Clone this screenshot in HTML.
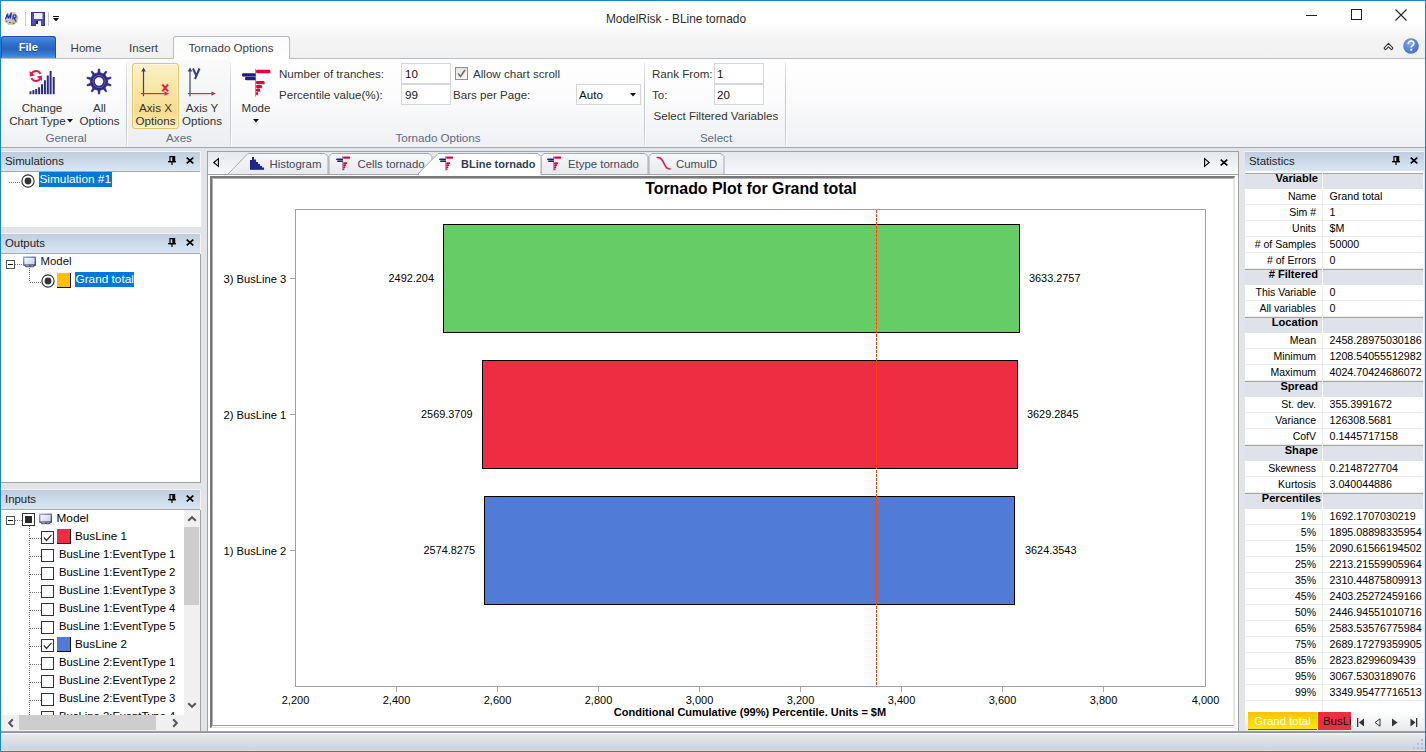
<!DOCTYPE html><html><head><meta charset="utf-8"><style>
html,body{margin:0;padding:0;}
body{width:1426px;height:752px;position:relative;overflow:hidden;background:#e1e5ea;font-family:"Liberation Sans",sans-serif;}
.r{position:absolute;box-sizing:border-box;}
.t{position:absolute;white-space:pre;line-height:20px;height:20px;}
svg{overflow:visible}
</style></head><body>
<div class="r" style="left:0px;top:0px;width:1426px;height:59px;background:linear-gradient(#ffffff 0px,#ffffff 22px,#f3f3f3 40px,#f1f1f1 58px)"></div>
<svg class="r" style="left:2px;top:9px;" width="20" height="20" viewBox="0 0 20 20"><defs><linearGradient id="dg" x1="0" y1="0" x2="1" y2="1"><stop offset="0" stop-color="#e4e2b8"/><stop offset="1" stop-color="#b9b48a"/></linearGradient></defs><polygon points="2.2,12 5,5.5 9,3 13,3 16.2,7.5 15.5,13 12,15.8 6,15.8" fill="url(#dg)"/><path d="M3.4 10.3 L5.4 5.2 L6.3 9 L9.4 4.2 L8.2 9.6" fill="none" stroke="#2a2ad8" stroke-width="1.3" stroke-linejoin="round"/><path d="M10.8 10.5 L11.5 6 Q14.5 5.6 14 8 Q13 9.2 11.8 8.5 L14.2 12.8" fill="none" stroke="#3030d0" stroke-width="1.2"/><path d="M3.5 12.3 H5.5 M7 13.5 H9 M11 14.4 H12.5" stroke="#55559a" stroke-width="1"/></svg>
<div class="r" style="left:25px;top:12px;width:1px;height:14px;background:#c9c9c9"></div>
<svg class="r" style="left:31px;top:12px;" width="15" height="15" viewBox="0 0 15 15"><rect x="0" y="0" width="14" height="14" fill="#4b4bc4"/><rect x="0.5" y="0.5" width="13" height="13" fill="none" stroke="#3333a0"/><rect x="3" y="1" width="8.5" height="6" fill="#eef0fa"/><rect x="5" y="9" width="5" height="5" fill="#f0f0f0"/><rect x="5" y="9" width="2" height="3" fill="#222"/></svg>
<div class="r" style="left:48px;top:12px;width:1px;height:14px;background:#c9c9c9"></div>
<div class="r" style="left:53px;top:16px;width:6px;height:1px;background:#111"></div>
<svg class="r" style="left:53px;top:18px;" width="6" height="4" viewBox="0 0 6 4"><path d="M0 0 H6 L3 3.5Z" fill="#111"/></svg>
<div class="t" style="left:376px;width:600px;text-align:center;top:8.88px;font-size:11.9px;font-weight:400;color:#2b2b2b;">ModelRisk - BLine tornado</div>
<div class="r" style="left:1306px;top:15px;width:11px;height:1px;background:#222"></div>
<div class="r" style="left:1351px;top:9px;width:11px;height:11px;border:1px solid #222"></div>
<svg class="r" style="left:1395px;top:9px;" width="12" height="12" viewBox="0 0 12 12"><path d="M0.5 0.5 L11.5 11.5 M11.5 0.5 L0.5 11.5" stroke="#222" stroke-width="1.1"/></svg>
<div class="r" style="left:0px;top:58px;width:1426px;height:1px;background:#b9bec5"></div>
<div class="r" style="left:1px;top:36px;width:55px;height:22px;border-radius:3px 3px 0 0;border:1px solid #1f4fa0;border-bottom:none;background:linear-gradient(#4a8ee2 0px,#3274cf 6px,#2a63bb 12px,#3a80d8 18px,#4da2f0 22px)"></div>
<div class="t" style="left:-271.7px;width:600px;text-align:center;top:37.42px;font-size:11.2px;font-weight:700;color:#ffffff;text-shadow:0 1px 0 rgba(30,40,80,0.6)">File</div>
<div class="t" style="left:-214px;width:600px;text-align:center;top:37.78px;font-size:11.6px;font-weight:400;color:#3c3c3c;">Home</div>
<div class="t" style="left:-156.5px;width:600px;text-align:center;top:37.78px;font-size:11.6px;font-weight:400;color:#3c3c3c;">Insert</div>
<div class="r" style="left:173px;top:36px;width:117px;height:24px;border:1px solid #b6bcc6;border-bottom:none;border-radius:3px 3px 0 0;background:linear-gradient(#fbfbfb,#ffffff)"></div>
<div class="t" style="left:-69px;width:600px;text-align:center;top:37.78px;font-size:11.6px;font-weight:400;color:#3c3c3c;">Tornado Options</div>
<svg class="r" style="left:1383px;top:42px;" width="11" height="9" viewBox="0 0 11 9"><path d="M1.2 5.8 L5.5 1.3 L9.8 5.8 Q10 7.3 8.4 7.6 L5.5 4.8 L2.6 7.6 Q1 7.3 1.2 5.8Z" fill="#fff" stroke="#333" stroke-width="1.1" stroke-linejoin="round"/></svg>
<svg class="r" style="left:1403px;top:38px;" width="16" height="16" viewBox="0 0 16 16"><defs><radialGradient id="hg" cx="0.4" cy="0.35" r="0.7"><stop offset="0" stop-color="#7aa6ea"/><stop offset="1" stop-color="#3f6fc4"/></radialGradient></defs><circle cx="8" cy="8" r="7.8" fill="url(#hg)"/><path d="M5.3 6 Q5.3 3.2 8.1 3.2 Q10.8 3.2 10.8 5.6 Q10.8 7 9.2 7.8 Q8.3 8.3 8.3 9.6" fill="none" stroke="#fff" stroke-width="1.7"/><rect x="7.3" y="10.8" width="2" height="2" fill="#fff"/></svg>
<div class="r" style="left:0px;top:59px;width:1426px;height:88px;background:linear-gradient(#ffffff 0px,#fbfbfc 40px,#eef0f3 88px)"></div>
<div class="r" style="left:0px;top:147px;width:1426px;height:1px;background:#a3a9b1"></div>
<div class="r" style="left:127px;top:60px;width:103px;height:87px;background:linear-gradient(#fafafa,#eceef1)"></div>
<div class="r" style="left:126px;top:62px;width:1px;height:84px;background:linear-gradient(#eceef0,#c8ccd2 30%,#c4c8ce 80%,#d8dce0)"></div>
<div class="r" style="left:127px;top:62px;width:1px;height:84px;background:rgba(255,255,255,0.8)"></div>
<div class="r" style="left:230px;top:62px;width:1px;height:84px;background:linear-gradient(#eceef0,#c8ccd2 30%,#c4c8ce 80%,#d8dce0)"></div>
<div class="r" style="left:231px;top:62px;width:1px;height:84px;background:rgba(255,255,255,0.8)"></div>
<div class="r" style="left:644px;top:62px;width:1px;height:84px;background:linear-gradient(#eceef0,#c8ccd2 30%,#c4c8ce 80%,#d8dce0)"></div>
<div class="r" style="left:645px;top:62px;width:1px;height:84px;background:rgba(255,255,255,0.8)"></div>
<div class="r" style="left:785px;top:62px;width:1px;height:84px;background:linear-gradient(#eceef0,#c8ccd2 30%,#c4c8ce 80%,#d8dce0)"></div>
<div class="r" style="left:786px;top:62px;width:1px;height:84px;background:rgba(255,255,255,0.8)"></div>
<div class="r" style="left:132px;top:63px;width:47px;height:66px;border:1px solid #e6c46a;border-radius:3px;box-shadow:inset 0 0 0 1px rgba(255,255,255,0.5);background:linear-gradient(#fcf1c6 0px,#f9e6a6 25px,#f8dc8c 48px,#f9e6a8 58px,#fcf2cc 65px)"></div>
<svg class="r" style="left:24px;top:64px;" width="36" height="36" viewBox="0 0 36 36"><rect x="5.50" y="27.30" width="2" height="2.90" fill="#2e2a7e"/><rect x="8.40" y="26.10" width="2" height="4.10" fill="#2e2a7e"/><rect x="11.20" y="24.90" width="2" height="5.30" fill="#2e2a7e"/><rect x="14.10" y="23.30" width="2" height="6.90" fill="#2e2a7e"/><rect x="17.00" y="20.30" width="2" height="9.90" fill="#2e2a7e"/><rect x="19.90" y="16.20" width="2" height="14.00" fill="#2e2a7e"/><rect x="22.80" y="11.50" width="2" height="18.70" fill="#2e2a7e"/><rect x="25.60" y="7.00" width="2" height="23.20" fill="#2e2a7e"/><rect x="28.70" y="13.00" width="2" height="17.20" fill="#2e2a7e"/><path d="M31.2 74.5 A5 5 0 0 1 40.5 73.8" transform="translate(-24,-64)" fill="none" stroke="#e5174a" stroke-width="1.9"/><path d="M29.5 71 L29.8 76.5 L34.8 75.5Z" transform="translate(-24,-64)" fill="#e5174a"/><path d="M40.8 77.5 A5 5 0 0 1 31.5 78.2" transform="translate(-24,-64)" fill="none" stroke="#e5174a" stroke-width="1.9"/><path d="M42 81 L41.8 75.5 L36.8 76.5Z" transform="translate(-24,-64)" fill="#e5174a"/></svg>
<svg class="r" style="left:82px;top:64px;" width="34" height="34" viewBox="0 0 34 34"><path d="M14.28 9.13 L15.90 8.77 L16.29 4.92 L17.71 4.92 L18.10 8.77 L19.72 9.13 L21.24 9.79 L23.82 6.90 L24.97 7.74 L23.02 11.09 L24.12 12.33 L24.96 13.75 L28.74 12.94 L29.18 14.29 L25.64 15.85 L25.80 17.50 L25.64 19.15 L29.18 20.71 L28.74 22.06 L24.96 21.25 L24.12 22.67 L23.02 23.91 L24.97 27.26 L23.82 28.10 L21.24 25.21 L19.72 25.87 L18.10 26.23 L17.71 30.08 L16.29 30.08 L15.90 26.23 L14.28 25.87 L12.76 25.21 L10.18 28.10 L9.03 27.26 L10.98 23.91 L9.88 22.67 L9.04 21.25 L5.26 22.06 L4.82 20.71 L8.36 19.15 L8.20 17.50 L8.36 15.85 L4.82 14.29 L5.26 12.94 L9.04 13.75 L9.88 12.33 L10.98 11.09 L9.03 7.74 L10.18 6.90 L12.76 9.79Z" fill="#2e2a86" stroke="#2e2a86" stroke-width="0.6" stroke-linejoin="round"/><circle cx="17" cy="17.5" r="4.2" fill="#fff"/><circle cx="17" cy="17.5" r="6.1" fill="none" stroke="#7b78b8" stroke-width="0.7"/></svg>
<div class="t" style="left:-258px;width:600px;text-align:center;top:97.58px;font-size:11.6px;font-weight:400;color:#333;">Change</div>
<div class="t" style="left:-262.5px;width:600px;text-align:center;top:110.78px;font-size:11.6px;font-weight:400;color:#333;">Chart Type</div>
<svg class="r" style="left:67px;top:119px;" width="6" height="4" viewBox="0 0 6 4"><path d="M0 0H6L3 3.5Z" fill="#111"/></svg>
<div class="t" style="left:-200.5px;width:600px;text-align:center;top:97.58px;font-size:11.6px;font-weight:400;color:#333;">All</div>
<div class="t" style="left:-200.5px;width:600px;text-align:center;top:110.78px;font-size:11.6px;font-weight:400;color:#333;">Options</div>
<div class="t" style="left:-234px;width:600px;text-align:center;top:127.78px;font-size:11.6px;font-weight:400;color:#5b6b80;">General</div>
<svg class="r" style="left:136px;top:64px;" width="36" height="36" viewBox="0 0 36 36"><path d="M7.5 32.2 V5.5" stroke="#3b3b8f" stroke-width="1.2"/><path d="M5.2 7.5 L7.5 3.5 L9.8 7.5Z" fill="#3b3b8f"/><path d="M5 29.6 H30" stroke="#e8234a" stroke-width="1.2"/><path d="M28.5 27.4 L33 29.6 L28.5 31.8Z" fill="#e8234a"/><path d="M26.3 20.5 L32 27.3 M32 20.5 L26.3 27.3" stroke="#e8234a" stroke-width="2"/></svg>
<div class="t" style="left:-144.5px;width:600px;text-align:center;top:97.58px;font-size:11.6px;font-weight:400;color:#333;">Axis X</div>
<div class="t" style="left:-144.5px;width:600px;text-align:center;top:110.78px;font-size:11.6px;font-weight:400;color:#333;">Options</div>
<svg class="r" style="left:183px;top:64px;" width="36" height="36" viewBox="0 0 36 36"><path d="M7 32.2 V5.5" stroke="#3b3b8f" stroke-width="1.2"/><path d="M4.7 7.5 L7 3.5 L9.3 7.5Z" fill="#3b3b8f"/><path d="M5 29.6 H30" stroke="#e8234a" stroke-width="1.2"/><path d="M28.5 27.4 L33 29.6 L28.5 31.8Z" fill="#e8234a"/><path d="M10 4.5 L13 11 M16.5 4.5 L12 15" stroke="#3b3b8f" stroke-width="2"/></svg>
<div class="t" style="left:-98px;width:600px;text-align:center;top:97.58px;font-size:11.6px;font-weight:400;color:#333;">Axis Y</div>
<div class="t" style="left:-98px;width:600px;text-align:center;top:110.78px;font-size:11.6px;font-weight:400;color:#333;">Options</div>
<div class="t" style="left:-121px;width:600px;text-align:center;top:127.78px;font-size:11.6px;font-weight:400;color:#5b6b80;">Axes</div>
<svg class="r" style="left:240px;top:66px;" width="34" height="32" viewBox="0 0 34 32"><rect x="16.7" y="4.4" width="14.2" height="3.4" rx="1.2" fill="#000" opacity="0.25"/><rect x="2.7" y="8.0" width="13.6" height="3.2" rx="1.2" fill="#000" opacity="0.25"/><rect x="5.7" y="11.7" width="10.6" height="3.1" rx="1.2" fill="#000" opacity="0.25"/><rect x="16.7" y="15.7" width="8.5" height="3" rx="1.2" fill="#000" opacity="0.25"/><rect x="16.7" y="19.7" width="6" height="2.9" rx="1.2" fill="#000" opacity="0.25"/><rect x="16.7" y="23.3" width="4" height="2.9" rx="1.2" fill="#000" opacity="0.25"/><rect x="16.7" y="26.7" width="2" height="2.9" rx="1.2" fill="#000" opacity="0.25"/><path d="M15.5 3 V30.5" stroke="#8a8a8a" stroke-width="0.9"/><rect x="16" y="3.7" width="14.2" height="3.4" rx="1.2" fill="#e5003b"/><rect x="2" y="7.3" width="13.6" height="3.2" rx="1.2" fill="#1b1f8c"/><rect x="5" y="11" width="10.6" height="3.1" rx="1.2" fill="#1b1f8c"/><rect x="16" y="15" width="8.5" height="3" rx="1.2" fill="#e5003b"/><rect x="16" y="19" width="6" height="2.9" rx="1.2" fill="#e5003b"/><rect x="16" y="22.6" width="4" height="2.9" rx="1.2" fill="#e5003b"/><rect x="16" y="26" width="2" height="2.9" rx="1.2" fill="#e5003b"/></svg>
<div class="t" style="left:-44px;width:600px;text-align:center;top:97.58px;font-size:11.6px;font-weight:400;color:#333;">Mode</div>
<svg class="r" style="left:253px;top:119px;" width="6" height="4" viewBox="0 0 6 4"><path d="M0 0H6L3 3.5Z" fill="#111"/></svg>
<div class="t" style="left:279px;top:63.98px;font-size:11.6px;font-weight:400;color:#333;">Number of tranches:</div>
<div class="t" style="left:279px;top:84.98px;font-size:11.6px;font-weight:400;color:#333;">Percentile value(%):</div>
<div class="r" style="left:401px;top:63px;width:50px;height:21px;border:1px solid #d4d7db;background:#fff"></div>
<div class="r" style="left:401px;top:84px;width:50px;height:21px;border:1px solid #d4d7db;background:#fff"></div>
<div class="t" style="left:405px;top:63.98px;font-size:11.6px;font-weight:400;color:#111;">10</div>
<div class="t" style="left:405px;top:84.98px;font-size:11.6px;font-weight:400;color:#111;">99</div>
<div class="r" style="left:455px;top:67px;width:13px;height:13px;border:1px solid #8e8f8f;background:linear-gradient(#e6e6e6,#f6f6f6)"></div>
<svg class="r" style="left:457px;top:69px;" width="9" height="9" viewBox="0 0 9 9"><path d="M1 4.5 L3.5 7.5 L8 1" fill="none" stroke="#6a6a6a" stroke-width="1.5"/></svg>
<div class="t" style="left:473px;top:63.98px;font-size:11.6px;font-weight:400;color:#333;">Allow chart scroll</div>
<div class="t" style="left:453px;top:84.98px;font-size:11.6px;font-weight:400;color:#333;">Bars per Page:</div>
<div class="r" style="left:576px;top:84px;width:65px;height:21px;border:1px solid #d4d7db;background:#fff"></div>
<div class="t" style="left:579px;top:84.98px;font-size:11.6px;font-weight:400;color:#111;">Auto</div>
<svg class="r" style="left:630px;top:93px;" width="6" height="4" viewBox="0 0 6 4"><path d="M0 0H6L3 3.5Z" fill="#111"/></svg>
<div class="t" style="left:138px;width:600px;text-align:center;top:127.78px;font-size:11.6px;font-weight:400;color:#5b6b80;">Tornado Options</div>
<div class="t" style="left:652px;top:63.98px;font-size:11.6px;font-weight:400;color:#333;">Rank From:</div>
<div class="t" style="left:652px;top:84.98px;font-size:11.6px;font-weight:400;color:#333;">To:</div>
<div class="r" style="left:714px;top:63px;width:50px;height:21px;border:1px solid #d4d7db;background:#fff"></div>
<div class="r" style="left:714px;top:84px;width:50px;height:21px;border:1px solid #d4d7db;background:#fff"></div>
<div class="t" style="left:717px;top:63.98px;font-size:11.6px;font-weight:400;color:#111;">1</div>
<div class="t" style="left:717px;top:84.98px;font-size:11.6px;font-weight:400;color:#111;">20</div>
<div class="t" style="left:653.5px;top:105.98px;font-size:11.6px;font-weight:400;color:#333;">Select Filtered Variables</div>
<div class="t" style="left:416px;width:600px;text-align:center;top:127.78px;font-size:11.6px;font-weight:400;color:#5b6b80;">Select</div>
<div class="r" style="left:1px;top:151px;width:200px;height:1px;background:#f3f3f1"></div>
<div class="r" style="left:200px;top:151px;width:1px;height:21px;background:#f3f3f1"></div>
<div class="r" style="left:1px;top:152px;width:199px;height:19px;background:linear-gradient(#bfcddd,#d9e6f4)"></div>
<div class="r" style="left:1px;top:171px;width:199px;height:1px;background:#a7a7a7"></div>
<div class="t" style="left:5px;top:151.05px;font-size:11.4px;font-weight:400;color:#1e1e1e;">Simulations</div>
<svg class="r" style="left:168px;top:156px;" width="8" height="9" viewBox="0 0 8 9"><rect x="2" y="0.6" width="4.6" height="5" fill="none" stroke="#000" stroke-width="1.2"/><rect x="4.3" y="0.6" width="2.3" height="5" fill="#000"/><rect x="0" y="5" width="8" height="1.3" fill="#000"/><rect x="3.4" y="6" width="1.2" height="3" fill="#000"/></svg>
<svg class="r" style="left:186px;top:157px;" width="8" height="7" viewBox="0 0 8 7"><path d="M0.7 0.6 L7.3 6.4 M7.3 0.6 L0.7 6.4" stroke="#000" stroke-width="1.7"/></svg>
<div class="r" style="left:1px;top:172px;width:200px;height:55px;background:#fff"></div>
<div class="r" style="left:9px;top:182px;width:12px;height:1px;background:repeating-linear-gradient(90deg,#777 0,#777 1px,transparent 1px,transparent 2px)"></div>
<svg class="r" style="left:20.5px;top:174.3px;" width="14" height="14" viewBox="0 0 14 14"><circle cx="7" cy="7" r="6.1" fill="#fff" stroke="#333" stroke-width="1.15"/><circle cx="7" cy="7" r="3.4" fill="#333"/></svg>
<div class="r" style="left:39px;top:172px;width:73px;height:15px;background:#0078d7"></div>
<div class="t" style="left:39.5px;top:169.11px;font-size:11.8px;font-weight:400;color:#fff;">Simulation #1</div>
<div class="r" style="left:1px;top:233px;width:200px;height:1px;background:#f3f3f1"></div>
<div class="r" style="left:200px;top:233px;width:1px;height:21px;background:#f3f3f1"></div>
<div class="r" style="left:1px;top:234px;width:199px;height:19px;background:linear-gradient(#bfcddd,#d9e6f4)"></div>
<div class="r" style="left:1px;top:253px;width:199px;height:1px;background:#a7a7a7"></div>
<div class="t" style="left:5px;top:233.05px;font-size:11.4px;font-weight:400;color:#1e1e1e;">Outputs</div>
<svg class="r" style="left:168px;top:238px;" width="8" height="9" viewBox="0 0 8 9"><rect x="2" y="0.6" width="4.6" height="5" fill="none" stroke="#000" stroke-width="1.2"/><rect x="4.3" y="0.6" width="2.3" height="5" fill="#000"/><rect x="0" y="5" width="8" height="1.3" fill="#000"/><rect x="3.4" y="6" width="1.2" height="3" fill="#000"/></svg>
<svg class="r" style="left:186px;top:239px;" width="8" height="7" viewBox="0 0 8 7"><path d="M0.7 0.6 L7.3 6.4 M7.3 0.6 L0.7 6.4" stroke="#000" stroke-width="1.7"/></svg>
<div class="r" style="left:1px;top:254px;width:200px;height:229px;background:#fff;border-right:1px solid #a0a0a0;border-bottom:1px solid #a0a0a0"></div>
<div class="r" style="left:6px;top:260px;width:9px;height:9px;border:1px solid #555;background:#fff"></div>
<div class="r" style="left:8px;top:264px;width:5px;height:1px;background:#111"></div>
<div class="r" style="left:15px;top:264px;width:7px;height:1px;background:repeating-linear-gradient(90deg,#777 0,#777 1px,transparent 1px,transparent 2px)"></div>
<svg class="r" style="left:23px;top:256px;" width="13" height="12" viewBox="0 0 13 12"><defs><linearGradient id="mgs" x1="0" y1="0" x2="1" y2="1"><stop offset="0" stop-color="#fbfcff"/><stop offset="1" stop-color="#c3cde6"/></linearGradient><linearGradient id="mgb" x1="0" y1="0" x2="1" y2="1"><stop offset="0" stop-color="#8aa0d0"/><stop offset="1" stop-color="#2c3a60"/></linearGradient></defs><rect x="0.7" y="1.2" width="11.6" height="7.8" fill="url(#mgs)" stroke="url(#mgb)" stroke-width="1.3"/><path d="M1.5 9 L3 10.8 H6 L6.8 9.8 L7.6 10.8 H10.2 L11.8 9" fill="none" stroke="#3a4a78" stroke-width="1.1"/></svg>
<div class="t" style="left:40.5px;top:251.45px;font-size:11.4px;font-weight:400;color:#111;">Model</div>
<div class="r" style="left:29px;top:268px;width:1px;height:14px;background:repeating-linear-gradient(180deg,#777 0,#777 1px,transparent 1px,transparent 2px)"></div>
<div class="r" style="left:30px;top:282px;width:11px;height:1px;background:repeating-linear-gradient(90deg,#777 0,#777 1px,transparent 1px,transparent 2px)"></div>
<svg class="r" style="left:40.5px;top:274px;" width="14" height="14" viewBox="0 0 14 14"><circle cx="7" cy="7" r="6.1" fill="#fff" stroke="#333" stroke-width="1.15"/><circle cx="7" cy="7" r="3.4" fill="#333"/></svg>
<div class="r" style="left:57px;top:273px;width:14px;height:15px;background:#ffc000;border-right:1.5px solid #111;border-bottom:1.5px solid #111"></div>
<div class="r" style="left:75px;top:272px;width:59px;height:15px;background:#0078d7"></div>
<div class="t" style="left:75.5px;top:269.11px;font-size:11.8px;font-weight:400;color:#fff;">Grand total</div>
<div class="r" style="left:1px;top:489px;width:200px;height:1px;background:#f3f3f1"></div>
<div class="r" style="left:200px;top:489px;width:1px;height:21px;background:#f3f3f1"></div>
<div class="r" style="left:1px;top:490px;width:199px;height:19px;background:linear-gradient(#bfcddd,#d9e6f4)"></div>
<div class="r" style="left:1px;top:509px;width:199px;height:1px;background:#a7a7a7"></div>
<div class="t" style="left:5px;top:489.05px;font-size:11.4px;font-weight:400;color:#1e1e1e;">Inputs</div>
<svg class="r" style="left:168px;top:494px;" width="8" height="9" viewBox="0 0 8 9"><rect x="2" y="0.6" width="4.6" height="5" fill="none" stroke="#000" stroke-width="1.2"/><rect x="4.3" y="0.6" width="2.3" height="5" fill="#000"/><rect x="0" y="5" width="8" height="1.3" fill="#000"/><rect x="3.4" y="6" width="1.2" height="3" fill="#000"/></svg>
<svg class="r" style="left:186px;top:495px;" width="8" height="7" viewBox="0 0 8 7"><path d="M0.7 0.6 L7.3 6.4 M7.3 0.6 L0.7 6.4" stroke="#000" stroke-width="1.7"/></svg>
<div class="r" style="left:1px;top:510px;width:200px;height:221px;background:#fff;border-right:1px solid #a0a0a0"></div>
<div class="r" style="left:1px;top:510px;width:183px;height:205px;overflow:hidden">
<div class="r" style="left:5px;top:6px;width:9px;height:9px;border:1px solid #555;background:#fff"></div>
<div class="r" style="left:7px;top:10px;width:5px;height:1px;background:#111"></div>
<div class="r" style="left:14px;top:10px;width:7px;height:1px;background:repeating-linear-gradient(90deg,#777 0,#777 1px,transparent 1px,transparent 2px)"></div>
<div class="r" style="left:21px;top:3px;width:13px;height:13px;border:1px solid #333;background:#fff"></div>
<div class="r" style="left:24px;top:6px;width:7px;height:7px;background:#2b2b2b"></div>
<svg class="r" style="left:38px;top:3px;" width="13" height="12" viewBox="0 0 13 12"><defs><linearGradient id="mgs2" x1="0" y1="0" x2="1" y2="1"><stop offset="0" stop-color="#fbfcff"/><stop offset="1" stop-color="#c3cde6"/></linearGradient><linearGradient id="mgb2" x1="0" y1="0" x2="1" y2="1"><stop offset="0" stop-color="#8aa0d0"/><stop offset="1" stop-color="#2c3a60"/></linearGradient></defs><rect x="0.7" y="1.2" width="11.6" height="7.8" fill="url(#mgs2)" stroke="url(#mgb2)" stroke-width="1.3"/><path d="M1.5 9 L3 10.8 H6 L6.8 9.8 L7.6 10.8 H10.2 L11.8 9" fill="none" stroke="#3a4a78" stroke-width="1.1"/></svg>
<div class="t" style="left:55.5px;top:-2.29px;font-size:11.8px;font-weight:400;color:#000;">Model</div>
<div class="r" style="left:28px;top:16px;width:1px;height:190px;background:repeating-linear-gradient(180deg,#777 0,#777 1px,transparent 1px,transparent 2px)"></div>
<div class="r" style="left:29px;top:28px;width:11px;height:1px;background:repeating-linear-gradient(90deg,#777 0,#777 1px,transparent 1px,transparent 2px)"></div>
<div class="r" style="left:40px;top:21px;width:13px;height:13px;border:1px solid #333;background:#fff"></div>
<svg class="r" style="left:42px;top:24px;" width="9" height="8" viewBox="0 0 9 8"><path d="M0.8 3.5 L3.5 6.5 L8.5 0.8" fill="none" stroke="#333" stroke-width="1.2"/></svg>
<div class="r" style="left:56px;top:19px;width:14px;height:15px;background:#ee2d42;border-right:1.5px solid #111;border-bottom:1.5px solid #111"></div>
<div class="t" style="left:74px;top:15.65px;font-size:11.7px;font-weight:400;color:#000;">BusLine 1</div>
<div class="r" style="left:29px;top:46px;width:11px;height:1px;background:repeating-linear-gradient(90deg,#777 0,#777 1px,transparent 1px,transparent 2px)"></div>
<div class="r" style="left:40px;top:39px;width:13px;height:13px;border:1px solid #333;background:#fff"></div>
<div class="t" style="left:58px;top:33.65px;font-size:11.7px;font-weight:400;color:#000;transform:scaleX(0.968);transform-origin:0 0">BusLine 1:EventType 1</div>
<div class="r" style="left:29px;top:64px;width:11px;height:1px;background:repeating-linear-gradient(90deg,#777 0,#777 1px,transparent 1px,transparent 2px)"></div>
<div class="r" style="left:40px;top:57px;width:13px;height:13px;border:1px solid #333;background:#fff"></div>
<div class="t" style="left:58px;top:51.65px;font-size:11.7px;font-weight:400;color:#000;transform:scaleX(0.968);transform-origin:0 0">BusLine 1:EventType 2</div>
<div class="r" style="left:29px;top:82px;width:11px;height:1px;background:repeating-linear-gradient(90deg,#777 0,#777 1px,transparent 1px,transparent 2px)"></div>
<div class="r" style="left:40px;top:75px;width:13px;height:13px;border:1px solid #333;background:#fff"></div>
<div class="t" style="left:58px;top:69.65px;font-size:11.7px;font-weight:400;color:#000;transform:scaleX(0.968);transform-origin:0 0">BusLine 1:EventType 3</div>
<div class="r" style="left:29px;top:100px;width:11px;height:1px;background:repeating-linear-gradient(90deg,#777 0,#777 1px,transparent 1px,transparent 2px)"></div>
<div class="r" style="left:40px;top:93px;width:13px;height:13px;border:1px solid #333;background:#fff"></div>
<div class="t" style="left:58px;top:87.65px;font-size:11.7px;font-weight:400;color:#000;transform:scaleX(0.968);transform-origin:0 0">BusLine 1:EventType 4</div>
<div class="r" style="left:29px;top:118px;width:11px;height:1px;background:repeating-linear-gradient(90deg,#777 0,#777 1px,transparent 1px,transparent 2px)"></div>
<div class="r" style="left:40px;top:111px;width:13px;height:13px;border:1px solid #333;background:#fff"></div>
<div class="t" style="left:58px;top:105.65px;font-size:11.7px;font-weight:400;color:#000;transform:scaleX(0.968);transform-origin:0 0">BusLine 1:EventType 5</div>
<div class="r" style="left:29px;top:136px;width:11px;height:1px;background:repeating-linear-gradient(90deg,#777 0,#777 1px,transparent 1px,transparent 2px)"></div>
<div class="r" style="left:40px;top:129px;width:13px;height:13px;border:1px solid #333;background:#fff"></div>
<svg class="r" style="left:42px;top:132px;" width="9" height="8" viewBox="0 0 9 8"><path d="M0.8 3.5 L3.5 6.5 L8.5 0.8" fill="none" stroke="#333" stroke-width="1.2"/></svg>
<div class="r" style="left:56px;top:127px;width:14px;height:15px;background:#507bd6;border-right:1.5px solid #111;border-bottom:1.5px solid #111"></div>
<div class="t" style="left:74px;top:123.65px;font-size:11.7px;font-weight:400;color:#000;">BusLine 2</div>
<div class="r" style="left:29px;top:154px;width:11px;height:1px;background:repeating-linear-gradient(90deg,#777 0,#777 1px,transparent 1px,transparent 2px)"></div>
<div class="r" style="left:40px;top:147px;width:13px;height:13px;border:1px solid #333;background:#fff"></div>
<div class="t" style="left:58px;top:141.65px;font-size:11.7px;font-weight:400;color:#000;transform:scaleX(0.968);transform-origin:0 0">BusLine 2:EventType 1</div>
<div class="r" style="left:29px;top:172px;width:11px;height:1px;background:repeating-linear-gradient(90deg,#777 0,#777 1px,transparent 1px,transparent 2px)"></div>
<div class="r" style="left:40px;top:165px;width:13px;height:13px;border:1px solid #333;background:#fff"></div>
<div class="t" style="left:58px;top:159.65px;font-size:11.7px;font-weight:400;color:#000;transform:scaleX(0.968);transform-origin:0 0">BusLine 2:EventType 2</div>
<div class="r" style="left:29px;top:190px;width:11px;height:1px;background:repeating-linear-gradient(90deg,#777 0,#777 1px,transparent 1px,transparent 2px)"></div>
<div class="r" style="left:40px;top:183px;width:13px;height:13px;border:1px solid #333;background:#fff"></div>
<div class="t" style="left:58px;top:177.65px;font-size:11.7px;font-weight:400;color:#000;transform:scaleX(0.968);transform-origin:0 0">BusLine 2:EventType 3</div>
<div class="r" style="left:29px;top:208px;width:11px;height:1px;background:repeating-linear-gradient(90deg,#777 0,#777 1px,transparent 1px,transparent 2px)"></div>
<div class="r" style="left:40px;top:201px;width:13px;height:13px;border:1px solid #333;background:#fff"></div>
<div class="t" style="left:58px;top:195.65px;font-size:11.7px;font-weight:400;color:#000;transform:scaleX(0.968);transform-origin:0 0">BusLine 2:EventType 4</div>
</div>
<div class="r" style="left:184px;top:510px;width:16px;height:205px;background:#f0f0f0"></div>
<div class="r" style="left:184px;top:527px;width:15px;height:78px;background:#cdcdcd"></div>
<svg class="r" style="left:187px;top:515px;" width="10" height="7" viewBox="0 0 10 7"><path d="M1.2 5.8 L5 2.2 L8.8 5.8" fill="none" stroke="#555" stroke-width="2"/></svg>
<svg class="r" style="left:187px;top:702px;" width="10" height="7" viewBox="0 0 10 7"><path d="M1.2 1.2 L5 4.8 L8.8 1.2" fill="none" stroke="#555" stroke-width="2"/></svg>
<div class="r" style="left:1px;top:715px;width:199px;height:16px;background:#f0f0f0"></div>
<div class="r" style="left:19px;top:715px;width:137px;height:15px;background:#cdcdcd"></div>
<svg class="r" style="left:7px;top:718px;" width="7" height="10" viewBox="0 0 7 10"><path d="M5.8 1.2 L2.2 5 L5.8 8.8" fill="none" stroke="#555" stroke-width="2"/></svg>
<svg class="r" style="left:172px;top:718px;" width="7" height="10" viewBox="0 0 7 10"><path d="M1.2 1.2 L4.8 5 L1.2 8.8" fill="none" stroke="#555" stroke-width="2"/></svg>
<div class="r" style="left:207px;top:151px;width:1032px;height:581px;background:#fff;border:1px solid #a0a0a0"></div>
<div class="r" style="left:208px;top:152px;width:1030px;height:22px;background:linear-gradient(#e5e8ed,#f8f9fb)"></div>
<div class="r" style="left:208px;top:174px;width:1030px;height:1px;background:#a0a0a0"></div>
<svg class="r" style="left:213px;top:158px;" width="6" height="9" viewBox="0 0 6 9"><path d="M5.4 0.6 L0.8 4.5 L5.4 8.4Z" fill="none" stroke="#000" stroke-width="1.1"/></svg>
<svg class="r" style="left:1204px;top:158px;" width="6" height="9" viewBox="0 0 6 9"><path d="M0.6 0.6 L5.2 4.5 L0.6 8.4Z" fill="none" stroke="#000" stroke-width="1.1"/></svg>
<svg class="r" style="left:1220px;top:159px;" width="8" height="7" viewBox="0 0 8 7"><path d="M0.7 0.6 L7.3 6.4 M7.3 0.6 L0.7 6.4" stroke="#000" stroke-width="1.7"/></svg>
<svg class="r" style="left:0px;top:151px" width="1426" height="25" viewBox="0 0 1426 25"><defs><linearGradient id="tabg" x1="0" y1="0" x2="0" y2="1"><stop offset="0" stop-color="#f7f8fa"/><stop offset="1" stop-color="#e8eaee"/></linearGradient></defs><polygon points="649,23.5 649,5.5 652,2.5 721,2.5 724,5.5 724,23.5" fill="url(#tabg)" stroke="#a3a7ad" stroke-width="1"/></svg>
<svg class="r" style="left:0px;top:151px" width="1426" height="25" viewBox="0 0 1426 25"><defs><linearGradient id="tabg" x1="0" y1="0" x2="0" y2="1"><stop offset="0" stop-color="#f7f8fa"/><stop offset="1" stop-color="#e8eaee"/></linearGradient></defs><polygon points="541,23.5 541,5.5 544,2.5 645,2.5 648,5.5 648,23.5" fill="url(#tabg)" stroke="#a3a7ad" stroke-width="1"/></svg>
<svg class="r" style="left:0px;top:151px" width="1426" height="25" viewBox="0 0 1426 25"><defs><linearGradient id="tabg" x1="0" y1="0" x2="0" y2="1"><stop offset="0" stop-color="#f7f8fa"/><stop offset="1" stop-color="#e8eaee"/></linearGradient></defs><polygon points="227.5,23.5 248,2.5 325,2.5 328,5.5 328,23.5" fill="url(#tabg)" stroke="#a3a7ad" stroke-width="1"/></svg>
<svg class="r" style="left:0px;top:151px" width="1426" height="25" viewBox="0 0 1426 25"><defs><linearGradient id="tabg" x1="0" y1="0" x2="0" y2="1"><stop offset="0" stop-color="#f7f8fa"/><stop offset="1" stop-color="#e8eaee"/></linearGradient></defs><polygon points="329,23.5 329,5.5 332,2.5 429,2.5 432,5.5 432,23.5" fill="url(#tabg)" stroke="#a3a7ad" stroke-width="1"/></svg>
<svg class="r" style="left:0px;top:151px" width="1426" height="25" viewBox="0 0 1426 25"><defs><linearGradient id="tabg" x1="0" y1="0" x2="0" y2="1"><stop offset="0" stop-color="#f7f8fa"/><stop offset="1" stop-color="#e8eaee"/></linearGradient></defs><polygon points="417.5,23.5 438,2.5 538,2.5 541,5.5 541,23.5" fill="#ffffff" stroke="#a3a7ad" stroke-width="1"/><rect x='419' y='23' width='121.5' height='1.5' fill='#fff'/></svg>
<svg class="r" style="left:246px;top:152px;" width="20" height="20" viewBox="0 0 20 20"><rect x="4" y="8" width="2.05" height="9.800000000000011" fill="#1a2388"/><rect x="6" y="5" width="2.05" height="12.800000000000011" fill="#1a2388"/><rect x="8" y="7.5" width="2.05" height="10.300000000000011" fill="#1a2388"/><rect x="10" y="10" width="2.05" height="7.800000000000011" fill="#1a2388"/><rect x="12" y="12" width="2.05" height="5.800000000000011" fill="#1a2388"/><rect x="14" y="14" width="2.05" height="3.8000000000000114" fill="#1a2388"/><rect x="16" y="15.5" width="2.05" height="2.3000000000000114" fill="#1a2388"/><rect x="5.6" y="9" width="0.4" height="8.800000000000011" fill="#4a55b0" opacity="0.6"/><rect x="7.6" y="6" width="0.4" height="11.800000000000011" fill="#4a55b0" opacity="0.6"/><rect x="9.6" y="8.5" width="0.4" height="9.300000000000011" fill="#4a55b0" opacity="0.6"/><rect x="11.6" y="11" width="0.4" height="6.800000000000011" fill="#4a55b0" opacity="0.6"/><rect x="13.6" y="13" width="0.4" height="4.800000000000011" fill="#4a55b0" opacity="0.6"/><rect x="15.6" y="15" width="0.4" height="2.8000000000000114" fill="#4a55b0" opacity="0.6"/><rect x="17.6" y="16.5" width="0.4" height="1.3000000000000114" fill="#4a55b0" opacity="0.6"/></svg>
<div class="t" style="left:269.5px;top:153.65px;font-size:11.4px;font-weight:400;color:#3c4a5c;">Histogram</div>
<svg class="r" style="left:333px;top:152px;" width="20" height="20" viewBox="0 0 20 20"><path d="M9.6 4 V18.4" stroke="#8a8a8a" stroke-width="0.9"/><rect x="10" y="4.5" width="7.2" height="2.3" rx="1.2" fill="#e5003b"/><rect x="3" y="6.4" width="7" height="1.9" rx="1.2" fill="#1b1f8c"/><rect x="4" y="8.4" width="6" height="1.7" rx="1.2" fill="#1b1f8c"/><rect x="10" y="10.2" width="4.2" height="2" rx="1.2" fill="#e5003b"/><rect x="10" y="12.2" width="3.2" height="2" rx="1.2" fill="#e5003b"/><rect x="10" y="14.2" width="2.3" height="2" rx="1.2" fill="#e5003b"/><rect x="10" y="16.2" width="1.5" height="2" rx="1.2" fill="#e5003b"/></svg>
<div class="t" style="left:357.5px;top:153.65px;font-size:11.4px;font-weight:400;color:#3c4a5c;">Cells tornado</div>
<svg class="r" style="left:436px;top:152px;" width="20" height="20" viewBox="0 0 20 20"><path d="M9.6 4 V18.4" stroke="#8a8a8a" stroke-width="0.9"/><rect x="10" y="4.5" width="7.2" height="2.3" rx="1.2" fill="#e5003b"/><rect x="3" y="6.4" width="7" height="1.9" rx="1.2" fill="#1b1f8c"/><rect x="4" y="8.4" width="6" height="1.7" rx="1.2" fill="#1b1f8c"/><rect x="10" y="10.2" width="4.2" height="2" rx="1.2" fill="#e5003b"/><rect x="10" y="12.2" width="3.2" height="2" rx="1.2" fill="#e5003b"/><rect x="10" y="14.2" width="2.3" height="2" rx="1.2" fill="#e5003b"/><rect x="10" y="16.2" width="1.5" height="2" rx="1.2" fill="#e5003b"/></svg>
<div class="t" style="left:461px;top:153.79px;font-size:11px;font-weight:700;color:#2f3e52;">BLine tornado</div>
<svg class="r" style="left:544px;top:152px;" width="20" height="20" viewBox="0 0 20 20"><path d="M9.6 4 V18.4" stroke="#8a8a8a" stroke-width="0.9"/><rect x="10" y="4.5" width="7.2" height="2.3" rx="1.2" fill="#e5003b"/><rect x="3" y="6.4" width="7" height="1.9" rx="1.2" fill="#1b1f8c"/><rect x="4" y="8.4" width="6" height="1.7" rx="1.2" fill="#1b1f8c"/><rect x="10" y="10.2" width="4.2" height="2" rx="1.2" fill="#e5003b"/><rect x="10" y="12.2" width="3.2" height="2" rx="1.2" fill="#e5003b"/><rect x="10" y="14.2" width="2.3" height="2" rx="1.2" fill="#e5003b"/><rect x="10" y="16.2" width="1.5" height="2" rx="1.2" fill="#e5003b"/></svg>
<div class="t" style="left:568px;top:153.65px;font-size:11.4px;font-weight:400;color:#3c4a5c;">Etype tornado</div>
<svg class="r" style="left:652px;top:152px;" width="20" height="20" viewBox="0 0 20 20"><path d="M5.2 5.5 C7.5 5.2 9 6 10.5 8.5 C12 11 13 14.5 15 16 C16 16.8 17.2 17 18 17" fill="none" stroke="#e5174f" stroke-width="1.6" stroke-linecap="round"/></svg>
<div class="t" style="left:676px;top:153.65px;font-size:11.4px;font-weight:400;color:#3c4a5c;">CumulD</div>
<div class="r" style="left:210px;top:176px;width:1025px;height:552px;background:#fff;border-top:2px solid #767676;border-left:2px solid #767676;border-right:1px solid #e4e4e4;border-bottom:1px solid #e4e4e4"></div>
<div class="r" style="left:212px;top:178px;width:1022px;height:548px;border-top:1px solid #b0b0b0;border-left:1px solid #b0b0b0;border-right:1px solid #e8e8e8;border-bottom:1px solid #a0a0a0"></div>
<div class="t" style="left:451px;width:600px;text-align:center;top:179.29px;font-size:15.9px;font-weight:700;color:#000;">Tornado Plot for Grand total</div>
<div class="r" style="left:295px;top:209px;width:911px;height:478px;border:1px solid #a0a0a0"></div>
<div class="r" style="left:443px;top:224px;width:577px;height:109px;background:#66cc66;border:1px solid #000"></div>
<div class="r" style="left:482px;top:360px;width:536px;height:109px;background:#ee2d42;border:1px solid #000"></div>
<div class="r" style="left:484px;top:496px;width:531px;height:109px;background:#507bd6;border:1px solid #000"></div>
<div class="r" style="left:290px;top:278px;width:5px;height:1px;background:#a0a0a0"></div>
<div class="t" style="left:-313.7px;width:600px;text-align:right;top:268.52px;font-size:11.2px;font-weight:400;color:#000;">3) BusLine 3</div>
<div class="t" style="left:-166px;width:600px;text-align:right;top:267.62px;font-size:10.9px;font-weight:400;color:#000;">2492.204</div>
<div class="t" style="left:1029px;top:267.62px;font-size:10.9px;font-weight:400;color:#000;">3633.2757</div>
<div class="r" style="left:290px;top:414px;width:5px;height:1px;background:#a0a0a0"></div>
<div class="t" style="left:-313.7px;width:600px;text-align:right;top:404.52px;font-size:11.2px;font-weight:400;color:#000;">2) BusLine 1</div>
<div class="t" style="left:-127.5px;width:600px;text-align:right;top:403.62px;font-size:10.9px;font-weight:400;color:#000;">2569.3709</div>
<div class="t" style="left:1027px;top:403.62px;font-size:10.9px;font-weight:400;color:#000;">3629.2845</div>
<div class="r" style="left:290px;top:550px;width:5px;height:1px;background:#a0a0a0"></div>
<div class="t" style="left:-313.7px;width:600px;text-align:right;top:540.52px;font-size:11.2px;font-weight:400;color:#000;">1) BusLine 2</div>
<div class="t" style="left:-125px;width:600px;text-align:right;top:539.62px;font-size:10.9px;font-weight:400;color:#000;">2574.8275</div>
<div class="t" style="left:1025px;top:539.62px;font-size:10.9px;font-weight:400;color:#000;">3624.3543</div>
<div class="t" style="left:-4.5px;width:600px;text-align:center;top:689.69px;font-size:11px;font-weight:400;color:#000;">2,200</div>
<div class="r" style="left:396px;top:687px;width:1px;height:5px;background:#aaaaa0"></div>
<div class="t" style="left:96.5px;width:600px;text-align:center;top:689.69px;font-size:11px;font-weight:400;color:#000;">2,400</div>
<div class="r" style="left:497px;top:687px;width:1px;height:5px;background:#aaaaa0"></div>
<div class="t" style="left:197.5px;width:600px;text-align:center;top:689.69px;font-size:11px;font-weight:400;color:#000;">2,600</div>
<div class="r" style="left:598px;top:687px;width:1px;height:5px;background:#aaaaa0"></div>
<div class="t" style="left:298.5px;width:600px;text-align:center;top:689.69px;font-size:11px;font-weight:400;color:#000;">2,800</div>
<div class="r" style="left:699px;top:687px;width:1px;height:5px;background:#aaaaa0"></div>
<div class="t" style="left:399.5px;width:600px;text-align:center;top:689.69px;font-size:11px;font-weight:400;color:#000;">3,000</div>
<div class="r" style="left:800px;top:687px;width:1px;height:5px;background:#aaaaa0"></div>
<div class="t" style="left:500.5px;width:600px;text-align:center;top:689.69px;font-size:11px;font-weight:400;color:#000;">3,200</div>
<div class="r" style="left:901px;top:687px;width:1px;height:5px;background:#aaaaa0"></div>
<div class="t" style="left:601.5px;width:600px;text-align:center;top:689.69px;font-size:11px;font-weight:400;color:#000;">3,400</div>
<div class="r" style="left:1002px;top:687px;width:1px;height:5px;background:#aaaaa0"></div>
<div class="t" style="left:702.5px;width:600px;text-align:center;top:689.69px;font-size:11px;font-weight:400;color:#000;">3,600</div>
<div class="r" style="left:1103px;top:687px;width:1px;height:5px;background:#aaaaa0"></div>
<div class="t" style="left:803.5px;width:600px;text-align:center;top:689.69px;font-size:11px;font-weight:400;color:#000;">3,800</div>
<div class="t" style="left:905.5px;width:600px;text-align:center;top:689.69px;font-size:11px;font-weight:400;color:#000;">4,000</div>
<div class="t" style="left:450px;width:600px;text-align:center;top:702.39px;font-size:11px;font-weight:700;color:#000;">Conditional Cumulative (99%) Percentile. Units = $M</div>
<div class="r" style="left:876px;top:210px;width:1px;height:476px;background:repeating-linear-gradient(180deg,#ff4500 0,#ff4500 3px,transparent 3px,transparent 4px)"></div>
<div class="r" style="left:1244px;top:151px;width:180px;height:1px;background:#f3f3f1"></div>
<div class="r" style="left:1245px;top:152px;width:179px;height:19px;background:linear-gradient(#bfcddd,#d9e6f4)"></div>
<div class="t" style="left:1249px;top:151.05px;font-size:11.4px;font-weight:400;color:#1e1e1e;">Statistics</div>
<svg class="r" style="left:1392px;top:156px;" width="8" height="9" viewBox="0 0 8 9"><rect x="2" y="0.6" width="4.6" height="5" fill="none" stroke="#000" stroke-width="1.2"/><rect x="4.3" y="0.6" width="2.3" height="5" fill="#000"/><rect x="0" y="5" width="8" height="1.3" fill="#000"/><rect x="3.4" y="6" width="1.2" height="3" fill="#000"/></svg>
<svg class="r" style="left:1410px;top:157px;" width="8" height="7" viewBox="0 0 8 7"><path d="M0.7 0.6 L7.3 6.4 M7.3 0.6 L0.7 6.4" stroke="#000" stroke-width="1.7"/></svg>
<div class="r" style="left:1245px;top:171px;width:179px;height:561px;background:#fff"></div>
<div class="r" style="left:1245px;top:171px;width:179px;height:2px;background:#fafbfc"></div>
<div class="r" style="left:1245px;top:173px;width:178px;height:539px;overflow:hidden">
<div class="r" style="left:0px;top:0px;width:178px;height:16px;background:#dfe3e9;border-top:1px solid #a6a6a6"></div>
<div class="r" style="left:77px;top:0px;width:1px;height:16px;background:#fff"></div>
<div class="t" style="left:-527px;width:600px;text-align:right;top:-4.55px;font-size:11.1px;font-weight:700;color:#000;">Variable</div>
<div class="r" style="left:0px;top:31px;width:178px;height:1px;background:#ececec"></div>
<div class="r" style="left:77px;top:16px;width:1px;height:16px;background:#ececec"></div>
<div class="t" style="left:-529px;width:600px;text-align:right;top:12.66px;font-size:10.5px;font-weight:400;color:#000;">Name</div>
<div class="t" style="left:84.5px;top:12.59px;font-size:10.7px;font-weight:400;color:#000;">Grand total</div>
<div class="r" style="left:0px;top:47px;width:178px;height:1px;background:#ececec"></div>
<div class="r" style="left:77px;top:32px;width:1px;height:16px;background:#ececec"></div>
<div class="t" style="left:-529px;width:600px;text-align:right;top:28.66px;font-size:10.5px;font-weight:400;color:#000;">Sim #</div>
<div class="t" style="left:84.5px;top:28.59px;font-size:10.7px;font-weight:400;color:#000;">1</div>
<div class="r" style="left:0px;top:63px;width:178px;height:1px;background:#ececec"></div>
<div class="r" style="left:77px;top:48px;width:1px;height:16px;background:#ececec"></div>
<div class="t" style="left:-529px;width:600px;text-align:right;top:44.66px;font-size:10.5px;font-weight:400;color:#000;">Units</div>
<div class="t" style="left:84.5px;top:44.59px;font-size:10.7px;font-weight:400;color:#000;">$M</div>
<div class="r" style="left:0px;top:79px;width:178px;height:1px;background:#ececec"></div>
<div class="r" style="left:77px;top:64px;width:1px;height:16px;background:#ececec"></div>
<div class="t" style="left:-529px;width:600px;text-align:right;top:60.66px;font-size:10.5px;font-weight:400;color:#000;"># of Samples</div>
<div class="t" style="left:84.5px;top:60.59px;font-size:10.7px;font-weight:400;color:#000;">50000</div>
<div class="r" style="left:0px;top:95px;width:178px;height:1px;background:#ececec"></div>
<div class="r" style="left:77px;top:80px;width:1px;height:16px;background:#ececec"></div>
<div class="t" style="left:-529px;width:600px;text-align:right;top:76.66px;font-size:10.5px;font-weight:400;color:#000;"># of Errors</div>
<div class="t" style="left:84.5px;top:76.59px;font-size:10.7px;font-weight:400;color:#000;">0</div>
<div class="r" style="left:0px;top:96px;width:178px;height:16px;background:#dfe3e9;border-top:1px solid #a6a6a6"></div>
<div class="r" style="left:77px;top:96px;width:1px;height:16px;background:#fff"></div>
<div class="t" style="left:-527px;width:600px;text-align:right;top:91.45px;font-size:11.1px;font-weight:700;color:#000;"># Filtered</div>
<div class="r" style="left:0px;top:127px;width:178px;height:1px;background:#ececec"></div>
<div class="r" style="left:77px;top:112px;width:1px;height:16px;background:#ececec"></div>
<div class="t" style="left:-529px;width:600px;text-align:right;top:108.66px;font-size:10.5px;font-weight:400;color:#000;">This Variable</div>
<div class="t" style="left:84.5px;top:108.59px;font-size:10.7px;font-weight:400;color:#000;">0</div>
<div class="r" style="left:0px;top:143px;width:178px;height:1px;background:#ececec"></div>
<div class="r" style="left:77px;top:128px;width:1px;height:16px;background:#ececec"></div>
<div class="t" style="left:-529px;width:600px;text-align:right;top:124.66px;font-size:10.5px;font-weight:400;color:#000;">All variables</div>
<div class="t" style="left:84.5px;top:124.59px;font-size:10.7px;font-weight:400;color:#000;">0</div>
<div class="r" style="left:0px;top:144px;width:178px;height:16px;background:#dfe3e9;border-top:1px solid #a6a6a6"></div>
<div class="r" style="left:77px;top:144px;width:1px;height:16px;background:#fff"></div>
<div class="t" style="left:-527px;width:600px;text-align:right;top:139.45px;font-size:11.1px;font-weight:700;color:#000;">Location</div>
<div class="r" style="left:0px;top:175px;width:178px;height:1px;background:#ececec"></div>
<div class="r" style="left:77px;top:160px;width:1px;height:16px;background:#ececec"></div>
<div class="t" style="left:-529px;width:600px;text-align:right;top:156.66px;font-size:10.5px;font-weight:400;color:#000;">Mean</div>
<div class="t" style="left:84.5px;top:156.59px;font-size:10.7px;font-weight:400;color:#000;">2458.28975030186</div>
<div class="r" style="left:0px;top:191px;width:178px;height:1px;background:#ececec"></div>
<div class="r" style="left:77px;top:176px;width:1px;height:16px;background:#ececec"></div>
<div class="t" style="left:-529px;width:600px;text-align:right;top:172.66px;font-size:10.5px;font-weight:400;color:#000;">Minimum</div>
<div class="t" style="left:84.5px;top:172.59px;font-size:10.7px;font-weight:400;color:#000;">1208.54055512982</div>
<div class="r" style="left:0px;top:207px;width:178px;height:1px;background:#ececec"></div>
<div class="r" style="left:77px;top:192px;width:1px;height:16px;background:#ececec"></div>
<div class="t" style="left:-529px;width:600px;text-align:right;top:188.66px;font-size:10.5px;font-weight:400;color:#000;">Maximum</div>
<div class="t" style="left:84.5px;top:188.59px;font-size:10.7px;font-weight:400;color:#000;">4024.70424686072</div>
<div class="r" style="left:0px;top:208px;width:178px;height:16px;background:#dfe3e9;border-top:1px solid #a6a6a6"></div>
<div class="r" style="left:77px;top:208px;width:1px;height:16px;background:#fff"></div>
<div class="t" style="left:-527px;width:600px;text-align:right;top:203.45px;font-size:11.1px;font-weight:700;color:#000;">Spread</div>
<div class="r" style="left:0px;top:239px;width:178px;height:1px;background:#ececec"></div>
<div class="r" style="left:77px;top:224px;width:1px;height:16px;background:#ececec"></div>
<div class="t" style="left:-529px;width:600px;text-align:right;top:220.66px;font-size:10.5px;font-weight:400;color:#000;">St. dev.</div>
<div class="t" style="left:84.5px;top:220.59px;font-size:10.7px;font-weight:400;color:#000;">355.3991672</div>
<div class="r" style="left:0px;top:255px;width:178px;height:1px;background:#ececec"></div>
<div class="r" style="left:77px;top:240px;width:1px;height:16px;background:#ececec"></div>
<div class="t" style="left:-529px;width:600px;text-align:right;top:236.66px;font-size:10.5px;font-weight:400;color:#000;">Variance</div>
<div class="t" style="left:84.5px;top:236.59px;font-size:10.7px;font-weight:400;color:#000;">126308.5681</div>
<div class="r" style="left:0px;top:271px;width:178px;height:1px;background:#ececec"></div>
<div class="r" style="left:77px;top:256px;width:1px;height:16px;background:#ececec"></div>
<div class="t" style="left:-529px;width:600px;text-align:right;top:252.66px;font-size:10.5px;font-weight:400;color:#000;">CofV</div>
<div class="t" style="left:84.5px;top:252.59px;font-size:10.7px;font-weight:400;color:#000;">0.1445717158</div>
<div class="r" style="left:0px;top:272px;width:178px;height:16px;background:#dfe3e9;border-top:1px solid #a6a6a6"></div>
<div class="r" style="left:77px;top:272px;width:1px;height:16px;background:#fff"></div>
<div class="t" style="left:-527px;width:600px;text-align:right;top:267.45px;font-size:11.1px;font-weight:700;color:#000;">Shape</div>
<div class="r" style="left:0px;top:303px;width:178px;height:1px;background:#ececec"></div>
<div class="r" style="left:77px;top:288px;width:1px;height:16px;background:#ececec"></div>
<div class="t" style="left:-529px;width:600px;text-align:right;top:284.66px;font-size:10.5px;font-weight:400;color:#000;">Skewness</div>
<div class="t" style="left:84.5px;top:284.59px;font-size:10.7px;font-weight:400;color:#000;">0.2148727704</div>
<div class="r" style="left:0px;top:319px;width:178px;height:1px;background:#ececec"></div>
<div class="r" style="left:77px;top:304px;width:1px;height:16px;background:#ececec"></div>
<div class="t" style="left:-529px;width:600px;text-align:right;top:300.66px;font-size:10.5px;font-weight:400;color:#000;">Kurtosis</div>
<div class="t" style="left:84.5px;top:300.59px;font-size:10.7px;font-weight:400;color:#000;">3.040044886</div>
<div class="r" style="left:0px;top:320px;width:178px;height:16px;background:#dfe3e9;border-top:1px solid #a6a6a6"></div>
<div class="r" style="left:77px;top:320px;width:1px;height:16px;background:#fff"></div>
<div class="t" style="left:-524px;width:600px;text-align:right;top:315.45px;font-size:11.1px;font-weight:700;color:#000;">Percentiles</div>
<div class="r" style="left:0px;top:351px;width:178px;height:1px;background:#ececec"></div>
<div class="r" style="left:77px;top:336px;width:1px;height:16px;background:#ececec"></div>
<div class="t" style="left:-529px;width:600px;text-align:right;top:332.66px;font-size:10.5px;font-weight:400;color:#000;">1%</div>
<div class="t" style="left:84.5px;top:332.59px;font-size:10.7px;font-weight:400;color:#000;">1692.1707030219</div>
<div class="r" style="left:0px;top:367px;width:178px;height:1px;background:#ececec"></div>
<div class="r" style="left:77px;top:352px;width:1px;height:16px;background:#ececec"></div>
<div class="t" style="left:-529px;width:600px;text-align:right;top:348.66px;font-size:10.5px;font-weight:400;color:#000;">5%</div>
<div class="t" style="left:84.5px;top:348.59px;font-size:10.7px;font-weight:400;color:#000;">1895.08898335954</div>
<div class="r" style="left:0px;top:383px;width:178px;height:1px;background:#ececec"></div>
<div class="r" style="left:77px;top:368px;width:1px;height:16px;background:#ececec"></div>
<div class="t" style="left:-529px;width:600px;text-align:right;top:364.66px;font-size:10.5px;font-weight:400;color:#000;">15%</div>
<div class="t" style="left:84.5px;top:364.59px;font-size:10.7px;font-weight:400;color:#000;">2090.61566194502</div>
<div class="r" style="left:0px;top:399px;width:178px;height:1px;background:#ececec"></div>
<div class="r" style="left:77px;top:384px;width:1px;height:16px;background:#ececec"></div>
<div class="t" style="left:-529px;width:600px;text-align:right;top:380.66px;font-size:10.5px;font-weight:400;color:#000;">25%</div>
<div class="t" style="left:84.5px;top:380.59px;font-size:10.7px;font-weight:400;color:#000;">2213.21559905964</div>
<div class="r" style="left:0px;top:415px;width:178px;height:1px;background:#ececec"></div>
<div class="r" style="left:77px;top:400px;width:1px;height:16px;background:#ececec"></div>
<div class="t" style="left:-529px;width:600px;text-align:right;top:396.66px;font-size:10.5px;font-weight:400;color:#000;">35%</div>
<div class="t" style="left:84.5px;top:396.59px;font-size:10.7px;font-weight:400;color:#000;">2310.44875809913</div>
<div class="r" style="left:0px;top:431px;width:178px;height:1px;background:#ececec"></div>
<div class="r" style="left:77px;top:416px;width:1px;height:16px;background:#ececec"></div>
<div class="t" style="left:-529px;width:600px;text-align:right;top:412.66px;font-size:10.5px;font-weight:400;color:#000;">45%</div>
<div class="t" style="left:84.5px;top:412.59px;font-size:10.7px;font-weight:400;color:#000;">2403.25272459166</div>
<div class="r" style="left:0px;top:447px;width:178px;height:1px;background:#ececec"></div>
<div class="r" style="left:77px;top:432px;width:1px;height:16px;background:#ececec"></div>
<div class="t" style="left:-529px;width:600px;text-align:right;top:428.66px;font-size:10.5px;font-weight:400;color:#000;">50%</div>
<div class="t" style="left:84.5px;top:428.59px;font-size:10.7px;font-weight:400;color:#000;">2446.94551010716</div>
<div class="r" style="left:0px;top:463px;width:178px;height:1px;background:#ececec"></div>
<div class="r" style="left:77px;top:448px;width:1px;height:16px;background:#ececec"></div>
<div class="t" style="left:-529px;width:600px;text-align:right;top:444.66px;font-size:10.5px;font-weight:400;color:#000;">65%</div>
<div class="t" style="left:84.5px;top:444.59px;font-size:10.7px;font-weight:400;color:#000;">2583.53576775984</div>
<div class="r" style="left:0px;top:479px;width:178px;height:1px;background:#ececec"></div>
<div class="r" style="left:77px;top:464px;width:1px;height:16px;background:#ececec"></div>
<div class="t" style="left:-529px;width:600px;text-align:right;top:460.66px;font-size:10.5px;font-weight:400;color:#000;">75%</div>
<div class="t" style="left:84.5px;top:460.59px;font-size:10.7px;font-weight:400;color:#000;">2689.17279359905</div>
<div class="r" style="left:0px;top:495px;width:178px;height:1px;background:#ececec"></div>
<div class="r" style="left:77px;top:480px;width:1px;height:16px;background:#ececec"></div>
<div class="t" style="left:-529px;width:600px;text-align:right;top:476.66px;font-size:10.5px;font-weight:400;color:#000;">85%</div>
<div class="t" style="left:84.5px;top:476.59px;font-size:10.7px;font-weight:400;color:#000;">2823.8299609439</div>
<div class="r" style="left:0px;top:511px;width:178px;height:1px;background:#ececec"></div>
<div class="r" style="left:77px;top:496px;width:1px;height:16px;background:#ececec"></div>
<div class="t" style="left:-529px;width:600px;text-align:right;top:492.66px;font-size:10.5px;font-weight:400;color:#000;">95%</div>
<div class="t" style="left:84.5px;top:492.59px;font-size:10.7px;font-weight:400;color:#000;">3067.5303189076</div>
<div class="r" style="left:0px;top:527px;width:178px;height:1px;background:#ececec"></div>
<div class="r" style="left:77px;top:512px;width:1px;height:16px;background:#ececec"></div>
<div class="t" style="left:-529px;width:600px;text-align:right;top:508.66px;font-size:10.5px;font-weight:400;color:#000;">99%</div>
<div class="t" style="left:84.5px;top:508.59px;font-size:10.7px;font-weight:400;color:#000;">3349.95477716513</div>
<div class="r" style="left:0px;top:543px;width:178px;height:1px;background:#ececec"></div>
<div class="r" style="left:77px;top:528px;width:1px;height:16px;background:#ececec"></div>
</div>
<div class="r" style="left:1245px;top:712px;width:179px;height:19px;background:linear-gradient(#ffffff,#e6e8eb)"></div>
<div class="r" style="left:1248px;top:712px;width:69px;height:18px;background:linear-gradient(#ffc000,#ffe600);border-bottom:1.5px solid #555"></div>
<div class="t" style="left:982.5px;width:600px;text-align:center;top:711.05px;font-size:11.4px;font-weight:400;color:#fff;">Grand total</div>
<div class="r" style="left:1318px;top:712px;width:33px;height:18px;background:#ee2d42"></div>
<div class="r" style="left:1318px;top:712px;width:33px;height:18px;overflow:hidden">
<div class="t" style="left:5px;top:-0.95px;font-size:11.4px;font-weight:400;color:#111;">BusLine 2</div>
</div>
<svg class="r" style="left:1357px;top:718px;" width="8" height="9" viewBox="0 0 8 9"><rect x="0" y="0" width="1.3" height="9" fill="#333"/><path d="M7 0.5 L2 4.5 L7 8.5Z" fill="#333"/></svg>
<svg class="r" style="left:1374px;top:718px;" width="7" height="9" viewBox="0 0 7 9"><path d="M6 0.8 L1 4.5 L6 8.2Z" fill="none" stroke="#333" stroke-width="1"/></svg>
<svg class="r" style="left:1391px;top:718px;" width="7" height="9" viewBox="0 0 7 9"><path d="M1 0.5 L6.5 4.5 L1 8.5Z" fill="#333"/></svg>
<svg class="r" style="left:1410px;top:718px;" width="8" height="9" viewBox="0 0 8 9"><path d="M0.5 0.5 L5.5 4.5 L0.5 8.5Z" fill="#333"/><rect x="6" y="0" width="1.3" height="9" fill="#333"/></svg>
<div class="r" style="left:0px;top:731px;width:1426px;height:1px;background:#a0a0a0"></div>
<div class="r" style="left:0px;top:732px;width:1426px;height:1px;background:#8c939b"></div>
<div class="r" style="left:0px;top:733px;width:1426px;height:1px;background:#f6f9fc"></div>
<div class="r" style="left:0px;top:734px;width:1426px;height:16px;background:linear-gradient(#e6e9ed,#cfd3d8)"></div>
<div class="r" style="left:0px;top:750px;width:1426px;height:1px;background:#e2dfdc"></div>
<svg class="r" style="left:1412px;top:738px;" width="11" height="11" viewBox="0 0 11 11"><rect x="9" y="1" width="2" height="2" fill="#b9bec4"/><rect x="9" y="5" width="2" height="2" fill="#b9bec4"/><rect x="5" y="5" width="2" height="2" fill="#b9bec4"/><rect x="9" y="9" width="2" height="2" fill="#b9bec4"/><rect x="5" y="9" width="2" height="2" fill="#b9bec4"/><rect x="1" y="9" width="2" height="2" fill="#b9bec4"/></svg>
<div class="r" style="left:0px;top:0px;width:1426px;height:1px;background:#1883d7"></div>
<div class="r" style="left:0px;top:0px;width:1px;height:752px;background:#1883d7"></div>
<div class="r" style="left:1425px;top:0px;width:1px;height:752px;background:#1883d7"></div>
<div class="r" style="left:0px;top:751px;width:1426px;height:1px;background:#1883d7"></div>
</body></html>
